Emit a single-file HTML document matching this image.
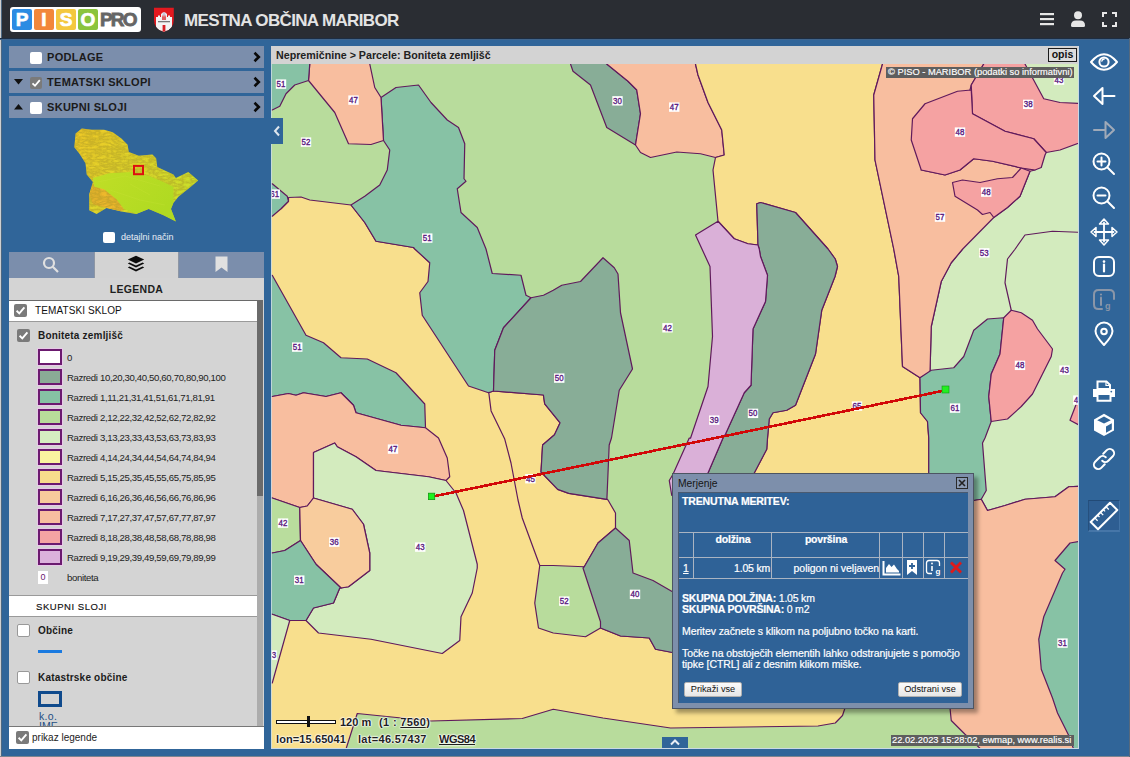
<!DOCTYPE html>
<html><head><meta charset="utf-8">
<style>
*{margin:0;padding:0;box-sizing:border-box}
html,body{width:1130px;height:757px;overflow:hidden;background:#306599;font-family:"Liberation Sans",sans-serif}
.a{position:absolute}
svg{display:block}
#hdr{left:0;top:0;width:1130px;height:38px;background:#2a2d33}
#edge{left:0;top:0;width:2px;height:757px;background:linear-gradient(90deg,#cfcfcf 0,#cfcfcf 1px,#4d6882 1px,#4d6882 2px)}
.row{left:9px;width:255px;height:22px;background:#7b8eac}
.row .t{position:absolute;left:38px;top:5px;font:bold 11px "Liberation Sans";color:#1b1b1b;letter-spacing:0.3px}
.cb{position:absolute;width:12px;height:12px;background:#fff;border-radius:2px}
.cbk{background:#7a7a7a}
.chev{position:absolute;right:3px;top:5px}
.tab{top:252px;height:26px;width:85px;background:#7b8eac}
.leg{font:9.6px "Liberation Sans";color:#222;letter-spacing:-0.35px}
.sw{position:absolute;left:38px;width:24px;height:16px;border:2.5px solid #6b1a6f;box-shadow:0 0 0 1px #e8c8e8}
.map{left:271px;top:64px;width:807px;height:684px;overflow:hidden;background:#b8dc9c}
.dt{font:10.5px "Liberation Sans";color:#fff;letter-spacing:-0.2px;-webkit-text-stroke:0.2px #fff}
.sc{font:bold 11px "Liberation Sans";color:#1e1e1e;white-space:nowrap;line-height:13px;text-shadow:0 0 2px #fff,0 0 2px #fff,0 0 2px #fff,0 0 1px #fff}
.btn{height:15px;background:linear-gradient(#fbfbfb,#e6e6e6);border:1px solid #b0b0b0;border-radius:2px;font:9.2px "Liberation Sans";color:#111;text-align:center;line-height:13px}
.dt{white-space:nowrap}
</style></head><body>
<div id="hdr" class="a"></div>
<div id="edge" class="a"></div>
<div class="a" style="left:0;top:38px;width:1130px;height:1px;background:#1d2d42"></div>
<div class="a" style="left:0;top:39px;width:1130px;height:1px;background:#40648b"></div>

<!-- logo -->
<div class="a" style="left:10px;top:7px;width:131px;height:25px;background:#fff;border-radius:3px"></div>
<div class="a" style="left:12px;top:9px;width:20px;height:21px;background:#2b8be3;border-radius:2px;color:#fff;font:bold 19px 'Liberation Sans';text-align:center;line-height:22px;-webkit-text-stroke:0.7px #fff">P</div>
<div class="a" style="left:34px;top:9px;width:20px;height:21px;background:#f2873a;border-radius:2px;color:#fff;font:bold 19px 'Liberation Sans';text-align:center;line-height:22px;-webkit-text-stroke:0.7px #fff">I</div>
<div class="a" style="left:56px;top:9px;width:20px;height:21px;background:#f4c83f;border-radius:2px;color:#fff;font:bold 19px 'Liberation Sans';text-align:center;line-height:22px;-webkit-text-stroke:0.7px #fff">S</div>
<div class="a" style="left:78px;top:9px;width:20px;height:21px;background:#8bc43d;border-radius:2px;color:#fff;font:bold 19px 'Liberation Sans';text-align:center;line-height:22px;-webkit-text-stroke:0.7px #fff">O</div>
<div class="a" style="left:100px;top:8px;font:bold 19px 'Liberation Sans';color:#666;letter-spacing:-1.8px;line-height:24px;-webkit-text-stroke:0.8px #666">PRO</div>

<!-- coat of arms -->
<svg class="a" style="left:153px;top:7px" width="22" height="26" viewBox="153 7 22 26">
<defs><clipPath id="sh"><path d="M154 7.8 H173.8 V20 Q173.8 29 163.9 31.8 Q154 29 154 20 Z"/></clipPath></defs>
<path d="M154 7.8 H173.8 V20 Q173.8 29 163.9 31.8 Q154 29 154 20 Z" fill="#e3191f"/>
<g clip-path="url(#sh)">
<path d="M156 30 V17 H158 V15.5 H160 V17 H162 V30 Z" fill="#f4f4f4"/>
<path d="M166 30 V17 H168 V15.5 H170 V17 H172 V30 Z" fill="#f4f4f4"/>
<path d="M161 22 V14 Q164 10.5 167 14 V22Z" fill="#f0eef0"/>
<rect x="162.7" y="12.5" width="2.6" height="3" fill="#c8c8e0"/>
<path d="M157 21 H171 V33 H157Z" fill="#f4f4f4"/>
<rect x="158" y="21.3" width="12" height="0.9" fill="#444"/>
<rect x="162.6" y="25" width="2.8" height="8" fill="#d62025"/>
<path d="M162 14.5 L163 17 L164 14.5 L165 17 L166 14.5 V20 H162Z" fill="#d62025" opacity="0.7"/>
</g>
</svg>
<div class="a" style="left:184px;top:11px;font:bold 17px 'Liberation Sans';color:#e3e3e3;letter-spacing:-0.65px;line-height:20px">MESTNA OBČINA MARIBOR</div>

<!-- header icons -->
<svg class="a" style="left:1039px;top:12px" width="16" height="14"><rect x="1" y="1" width="14" height="2.2" fill="#e6e6e6"/><rect x="1" y="6" width="14" height="2.2" fill="#e6e6e6"/><rect x="1" y="11" width="14" height="2.2" fill="#e6e6e6"/></svg>
<svg class="a" style="left:1070px;top:11px" width="16" height="17"><circle cx="8" cy="4.3" r="4" fill="#e6e6e6"/><path d="M1 14.5 Q1 9.6 6 9.6 H10 Q15 9.6 15 14.5 Q15 16 13.5 16 H2.5 Q1 16 1 14.5Z" fill="#e6e6e6"/></svg>
<svg class="a" style="left:1101px;top:11px" width="17" height="17" fill="none" stroke="#e6e6e6" stroke-width="2"><path d="M2 6V2H6M11 2H15V6M15 11V15H11M6 15H2V11"/></svg>

<!-- left rows -->
<div class="a row" style="top:46px"><div class="cb" style="left:21px;top:6px"></div><div class="t">PODLAGE</div><svg class="chev" width="8" height="12"><path d="M1.5 1.8 L5.8 6 L1.5 10.2" stroke="#0a0a0a" stroke-width="2.6" fill="none"/></svg></div>
<div class="a row" style="top:71px"><svg class="a" style="left:5px;top:8px" width="9" height="6"><path d="M0 0H9L4.5 5.5Z" fill="#111"/></svg><div class="cb cbk" style="left:21px;top:6px"><svg width="12" height="12"><path d="M2.5 6.3 L5 8.8 L9.8 3.2" stroke="#fff" stroke-width="1.8" fill="none"/></svg></div><div class="t">TEMATSKI SKLOPI</div><svg class="chev" width="8" height="12"><path d="M1.5 1.8 L5.8 6 L1.5 10.2" stroke="#0a0a0a" stroke-width="2.6" fill="none"/></svg></div>
<div class="a row" style="top:96px"><svg class="a" style="left:5px;top:8px" width="9" height="6"><path d="M0 5.5H9L4.5 0Z" fill="#111"/></svg><div class="cb" style="left:21px;top:6px"></div><div class="t">SKUPNI SLOJI</div><svg class="chev" width="8" height="12"><path d="M1.5 1.8 L5.8 6 L1.5 10.2" stroke="#0a0a0a" stroke-width="2.6" fill="none"/></svg></div>

<!-- overview map placeholder -->

<svg class="a" style="left:70px;top:125px" width="135" height="100" viewBox="70 125 135 100">
<defs>
<linearGradient id="g1" x1="0" y1="0" x2="1" y2="0.6"><stop offset="0" stop-color="#f0c626"/><stop offset="0.45" stop-color="#e2d42a"/><stop offset="1" stop-color="#c8e02a"/></linearGradient>
<linearGradient id="g2" x1="0" y1="0" x2="1" y2="0.5"><stop offset="0" stop-color="#c0de26"/><stop offset="1" stop-color="#b0da22"/></linearGradient>
<clipPath id="ovc"><path d="M75.6 133.5 L81.8 128.6 L91.7 129.8 L104.1 129.8 L112.7 132.3 L121.4 138.5 L127.6 144.7 L128.8 152.1 L138.8 155.8 L152.4 154.6 L156.1 158.3 L157.3 167 L173.4 174.4 L175.9 178.1 L188.3 171.9 L198.2 180.6 L190.8 186.8 L178.4 196.7 L173.4 202.9 L171 209.1 L175.9 221.5 L163.5 215.3 L148.7 209.1 L136.3 214.1 L121.4 211.6 L106.5 207.9 L96.6 214.1 L89.2 210.3 L89.2 194.2 L92.9 181.9 L86.7 174.4 L85.5 163.3 L79.3 153.4 L74.3 147.2Z"/></clipPath>
<filter id="tex" x="0" y="0" width="100%" height="100%"><feTurbulence type="turbulence" baseFrequency="0.12 0.3" numOctaves="3" seed="11"/><feColorMatrix type="matrix" values="0 0 0 0 0.35  0 0 0 0 0.28  0 0 0 0 0.02  0 0 0 -2.2 1.25"/></filter>
</defs>
<g clip-path="url(#ovc)">
<rect x="70" y="125" width="135" height="100" fill="url(#g1)"/>
<path d="M89.2 194.2 L92.9 204.2 L106.5 207.9 L121.4 211.6 L123.9 209.1 L116.5 199.2 L104.1 189.3 L92.9 184.3Z" fill="#eeb82c"/>
<rect x="70" y="125" width="135" height="100" filter="url(#tex)" opacity="0.42"/>
<path d="M92.9 178.1 L109 173.2 L131.3 171.9 L148.7 175.7 L163.5 181.9 L173.4 186.8 L173.4 202.9 L171 209.1 L175.9 221.5 L163.5 215.3 L148.7 209.1 L136.3 214.1 L123.9 209.1 L116.5 199.2 L104.1 189.3 L94.2 186.8Z" fill="url(#g2)"/>
<g stroke="#d4ea48" stroke-width="0.5" opacity="0.35" fill="none"><path d="M98 182 L125 176 L160 186 M110 190 L140 200 L165 205 M130 184 L150 195"/></g>
</g>
<rect x="134" y="165.9" width="9" height="8.3" fill="none" stroke="#dd1010" stroke-width="2"/>
</svg>

<div class="a cb" style="left:103px;top:232px;width:12px;height:11px"></div>
<div class="a" style="left:121px;top:232px;font:9px 'Liberation Sans';color:#e8eef5">detajlni način</div>

<!-- tabs -->
<div class="a tab" style="left:9px"></div>
<div class="a tab" style="left:94px;background:#d3d3d3;border-left:1px solid #8d96a4;border-right:1px solid #8d96a4"></div>
<div class="a tab" style="left:179px"></div>
<svg class="a" style="left:42px;top:256px" width="18" height="18" fill="none" stroke="#e0e0e0" stroke-width="2.2"><circle cx="7" cy="7" r="5"/><path d="M10.8 10.8 L16 16"/></svg>
<svg class="a" style="left:127px;top:255px" width="18" height="18" viewBox="0 0 18 18"><path d="M9 0.8 L17.2 4.6 L9 8.4 L0.8 4.6Z" fill="#0c0c0c"/><path d="M2.4 7.6 L9 10.6 L15.6 7.6 L17.2 8.6 L9 12.5 L0.8 8.6Z" fill="#0c0c0c"/><path d="M2.4 11.6 L9 14.6 L15.6 11.6 L17.2 12.6 L9 16.6 L0.8 12.6Z" fill="#0c0c0c"/></svg>
<svg class="a" style="left:215px;top:256px" width="13" height="17"><path d="M0.5 0.5H12.5V16L6.5 11.5L0.5 16Z" fill="#e0e0e0"/></svg>

<!-- legend panel -->
<div class="a" style="left:9px;top:278px;width:255px;height:448px;background:#d4d4d4"></div>
<div class="a" style="left:9px;top:283px;width:255px;text-align:center;font:bold 10.5px 'Liberation Sans';color:#1e1e1e;letter-spacing:0.3px">LEGENDA</div>
<div class="a" style="left:9px;top:300px;width:249px;height:1px;background:#6a6a6a"></div>
<div class="a" style="left:9px;top:301px;width:249px;height:20px;background:#fff"></div>
<div class="a" style="left:9px;top:321px;width:249px;height:1px;background:#9a9a9a"></div>
<div class="a cb cbk" style="left:14px;top:304px;width:13px;height:13px"><svg width="13" height="13"><path d="M2.6 6.8 L5.3 9.4 L10.4 3.4" stroke="#fff" stroke-width="1.9" fill="none"/></svg></div>
<div class="a" style="left:35px;top:305px;font:10px 'Liberation Sans';color:#111;letter-spacing:0.1px">TEMATSKI SKLOP</div>
<div class="a cb cbk" style="left:17px;top:329px;width:13px;height:13px"><svg width="13" height="13"><path d="M2.6 6.8 L5.3 9.4 L10.4 3.4" stroke="#fff" stroke-width="1.9" fill="none"/></svg></div>
<div class="a" style="left:38px;top:330px;font:bold 10px 'Liberation Sans';color:#1b1b1b;letter-spacing:0.2px">Boniteta zemljišč</div>

<div class="a sw" style="top:349px;background:#fff"></div><div class="a leg" style="left:67px;top:352px">0</div>
<div class="a sw" style="top:369px;background:#8aab96"></div><div class="a leg" style="left:67px;top:372px">Razredi 10,20,30,40,50,60,70,80,90,100</div>
<div class="a sw" style="top:389px;background:#86c2a4"></div><div class="a leg" style="left:67px;top:392px">Razredi 1,11,21,31,41,51,61,71,81,91</div>
<div class="a sw" style="top:409px;background:#b8dc9a"></div><div class="a leg" style="left:67px;top:412px">Razredi 2,12,22,32,42,52,62,72,82,92</div>
<div class="a sw" style="top:429px;background:#d6edc2"></div><div class="a leg" style="left:67px;top:432px">Razredi 3,13,23,33,43,53,63,73,83,93</div>
<div class="a sw" style="top:449px;background:#faf3a0"></div><div class="a leg" style="left:67px;top:452px">Razredi 4,14,24,34,44,54,64,74,84,94</div>
<div class="a sw" style="top:469px;background:#f8dc8c"></div><div class="a leg" style="left:67px;top:472px">Razredi 5,15,25,35,45,55,65,75,85,95</div>
<div class="a sw" style="top:489px;background:#f8cb9c"></div><div class="a leg" style="left:67px;top:492px">Razredi 6,16,26,36,46,56,66,76,86,96</div>
<div class="a sw" style="top:509px;background:#f8bea0"></div><div class="a leg" style="left:67px;top:512px">Razredi 7,17,27,37,47,57,67,77,87,97</div>
<div class="a sw" style="top:529px;background:#f5a3a3"></div><div class="a leg" style="left:67px;top:532px">Razredi 8,18,28,38,48,58,68,78,88,98</div>
<div class="a sw" style="top:549px;background:#dcb2dc"></div><div class="a leg" style="left:67px;top:552px">Razredi 9,19,29,39,49,59,69,79,89,99</div>
<div class="a" style="left:38px;top:571px;width:10px;height:13px;background:#fff;font:9px 'Liberation Sans';color:#6b1a6f;text-align:center;line-height:13px">0</div>
<div class="a leg" style="left:67px;top:572px">boniteta</div>

<div class="a" style="left:9px;top:595px;width:249px;height:1px;background:#9a9a9a"></div>
<div class="a" style="left:9px;top:596px;width:249px;height:20px;background:#fff"></div>
<div class="a" style="left:9px;top:616px;width:249px;height:1px;background:#9a9a9a"></div>
<div class="a" style="left:36px;top:601px;font:9.5px 'Liberation Sans';color:#111;letter-spacing:0.55px;-webkit-text-stroke:0.15px #111">SKUPNI SLOJI</div>

<div class="a cb" style="left:17px;top:624px;width:13px;height:13px;border:1px solid #999"></div>
<div class="a" style="left:38px;top:625px;font:bold 10px 'Liberation Sans';color:#1b1b1b;letter-spacing:0.2px">Občine</div>
<div class="a" style="left:38px;top:650px;width:24px;height:3px;background:#1a7ae0"></div>
<div class="a cb" style="left:17px;top:671px;width:13px;height:13px;border:1px solid #999"></div>
<div class="a" style="left:38px;top:672px;font:bold 10px 'Liberation Sans';color:#1b1b1b;letter-spacing:0.2px">Katastrske občine</div>
<div class="a" style="left:38px;top:691px;width:24px;height:16px;border:3px solid #0f4a8c"></div>
<div class="a" style="left:39px;top:710px;font:10.5px 'Liberation Sans';color:#1f4f84;letter-spacing:0.3px">k.o.</div>
<div class="a" style="left:39px;top:721px;height:5px;overflow:hidden;font:10.5px 'Liberation Sans';color:#1f4f84;line-height:10px">IME</div>

<!-- scrollbar -->
<div class="a" style="left:257px;top:300px;width:6px;height:426px;background:#acacac"></div>
<div class="a" style="left:257px;top:300px;width:6px;height:196px;background:#6b6b6b"></div>

<!-- footer -->
<div class="a" style="left:9px;top:726px;width:255px;height:23px;background:#fff;border-top:1px solid #777"></div>
<div class="a cb cbk" style="left:16px;top:731px;width:13px;height:13px"><svg width="13" height="13"><path d="M2.6 6.8 L5.3 9.4 L10.4 3.4" stroke="#fff" stroke-width="1.9" fill="none"/></svg></div>
<div class="a" style="left:32px;top:732px;font:10px 'Liberation Sans';color:#222">prikaz legende</div>

<!-- breadcrumb -->
<div class="a" style="left:271px;top:46px;width:808px;height:18px;background:#d3d3d3"></div>
<div class="a" style="left:276px;top:49px;font:bold 10.7px 'Liberation Sans';color:#222">Nepremičnine &gt; Parcele: Boniteta zemljišč</div>
<div class="a" style="left:1048px;top:48px;width:29px;height:14px;border:1.5px solid #1a1a1a;background:#dcdcdc;font:bold 10.5px 'Liberation Sans';color:#111;text-align:center;line-height:11px">opis</div>

<!-- MAP -->
<div class="a map" id="map">
<svg width="807" height="684" viewBox="271 64 807 684" id="mapsvg">
<g stroke="#601a5c" stroke-width="1.2" stroke-linejoin="round">
<polygon points="265,216.25 281,208.75 288.5,201.25 288.5,197.5 301,197 309.75,200 351,205 364.75,222.5 376,241.25 413.5,247.5 470,300 488.5,392.75 493.5,391 543.4,395 544.7,403.8 560.1,422.8 554.5,434.7 542.6,445 541,472 557.7,489.4 568.8,493.4 606.9,499.3 608,500 615.5,513 615.5,528 598,543 584.25,566.75 553,565.5 539.75,565.5 534.75,603 538.5,628 553.25,633 585.5,636.75 600.5,628 620.5,636 649.25,638 655.5,649.25 672.5,652.5 700,652 700,700 845,700 845,708 842.5,715.5 835.25,723 818,726 670.5,728 603,718 553.25,709.25 522.25,718.5 431,721 357.25,713.5 344.75,753 265,753" fill="#f8df8d"/>
<polygon points="381,97.5 396,87.5 418.5,85 431,102.5 447.25,120 458.5,127.5 464.75,143.75 464,178.75 466,181.25 457.25,188.75 461,212.5 477.25,227.5 486,249 492.25,273.5 521,275.25 526,295.25 531,297.75 503.5,327.75 494.75,350.25 493.5,391 488.5,392.75 468.5,386 422.25,315.25 419.75,292.75 428,281.5 429.75,262.75 414.75,249 413.5,247.5 376,241.25 364.75,222.5 351,205 364.75,196.25 379.75,185 387.25,170 389.75,150 383.5,140.5" fill="#87c2a5"/>
<polygon points="531,297.75 543.5,295.25 553.25,290.25 561.75,285.25 580.5,281.5 603,257.75 614.25,267.75 618,274 620.5,312.75 632.5,369 619.25,390.25 611.5,438 609.2,445 606.9,499.3 568.8,493.4 557.7,489.4 541,472 542.6,445 554.5,434.7 560.1,422.8 544.7,403.8 543.4,395 493.5,391 494.75,350.25 503.5,327.75" fill="#88ad97"/>
<polygon points="309.75,64 309.75,59 369.75,59 369.75,64 374.75,87.5 381,97.5 383.5,140.5 371,144.5 348.5,143.75 334.75,112.5 308.5,80.5" fill="#f8be9f"/>
<polygon points="265,64 265,59 309.75,59 309.75,64 308.5,80.5 294.75,85 286,93.75 279.75,106.25 272.25,110 265,110" fill="#87c2a5"/>
<polygon points="265,183.75 272.25,183.75 287.25,196.25 288.5,201.25 281,208.75 272.25,216.25 265,216.25" fill="#87c2a5"/>
<polygon points="570.5,64 570.5,59 606.75,59 606.75,64 628,81.25 636.75,90 640.5,113.75 635.5,145 606.75,127.5 590.5,85 573,71.25" fill="#88ad97"/>
<polygon points="606.75,64 606.75,59 695.5,59 695.5,64 698,75 708,102.5 721.75,130 724.25,155 715.5,157.5 700.5,153.75 676.75,152 650.5,157.5 640.5,152.5 635.5,145 640.5,113.75 636.75,90 628,81.25" fill="#f8be9f"/>
<polygon points="695.5,64 695.5,59 882.5,59 882.5,64 873.75,95 875,160 893.75,249 898.75,276.5 902.5,366.5 920,377.75 920.5,412.75 927.5,421.5 928.75,438 928.75,480 754,480 754.25,473 766.75,449.25 767.5,438.25 769.25,419 773,412.75 786.75,410.25 795.5,405.25 815.5,354 821.75,310.25 835,276.5 837.5,266.5 835.25,259 828,249 795.5,212.5 760.5,202.5 756.75,203.75 758,245 748,243.75 734.25,238.75 718,221.25 713,170 715.5,157.5 724.25,155 721.75,130 708,102.5 698,75" fill="#f8df8d"/>
<polygon points="756.75,203.75 760.5,202.5 795.5,212.5 828,249 835.25,259 837.5,266.5 835,276.5 821.75,310.25 815.5,354 795.5,405.25 786.75,410.25 773,412.75 769.25,419 767.5,438.25 766.75,449.25 754.25,473 754,480 700,480 708,473 723,438 725.5,434 744.25,392.75 751,385.25 753,329 765.5,301.5 767.5,275.25 760.5,256.5 759.25,249 758,245" fill="#88ad97"/>
<polygon points="718,221.25 734.25,238.75 748,243.75 758,245 759.25,249 760.5,256.5 767.5,275.25 765.5,301.5 753,329 751,385.25 744.25,392.75 725.5,434 723,438 708,473 700,480 680,496 671.75,495.5 669.25,480.5 673,474.25 689.25,438 690.5,438.25 708,386.5 712.5,336.5 710,266.5 695.5,235" fill="#dab0d8"/>
<polygon points="584.25,566.75 598,543 615.5,528 629.25,540.5 633,573 653,580.5 672.5,591.75 690,600 690,652.5 672.5,652.5 655.5,649.25 649.25,638 620.5,636 600.5,628 600.5,621.75 583,568" fill="#88ad97"/>
<polygon points="935,64 935,59 1084,59 1084,64 1084,486.25 1068.75,486.75 1055,496.75 1025,499.25 1005,505.5 987.5,510.5 981.25,499.25 973.75,500.5 935,500 931,372 930,372.75 931.25,326.5 941.25,281.5 951.25,262.75 962.5,249.25 935,240" fill="#d3ebbe"/>
<polygon points="882.5,64 882.5,59 983.75,59 983.75,64 971.25,85 965,110 960,130 921.25,170 945,175 960,170 973.75,158.75 992.5,161.25 1021.25,168 1035,170 1030,171.25 1020,196.25 1007.5,207.5 993.75,217.5 962.5,249.25 951.25,262.75 941.25,281.5 931.25,326.5 930,372.75 920,377.75 902.5,366.5 898.75,276.5 893.75,249 875,160 873.75,95" fill="#f8be9f"/>
<polygon points="983.75,64 983.75,59 1025,59 1025,64 1043.75,98.75 1060,102.5 1084,103.75 1084,141.25 1060,150 1046.25,152.5 1033.75,138.75 1005,131.25 972.5,113.75 971.25,85" fill="#f5a2a2"/>
<polygon points="971.25,90 957.5,91.25 925,103.75 912.5,118.75 911.25,140 921.25,170 945,175 960,170 973.75,158.75 992.5,161.25 1021.25,168 1035,170 1041.25,167.5 1045,155 1046.25,152.5 1033.75,138.75 1005,131.25 972.5,113.75" fill="#f5a2a2"/>
<polygon points="952.5,182.5 962.5,180 980,182.5 997.5,178.75 1012.5,177.5 1021.25,168 1030,171.25 1020,196.25 1007.5,207.5 993.75,217.5 990,212.5 982.5,214.5 977.5,210 955,196.25" fill="#f5a2a2"/>
<polygon points="920,377.75 931.25,370.25 953.75,367.75 963.75,356.5 973.75,330.25 987.5,319 1003.75,317.75 1000,354 991.25,374 988.75,396.5 991.25,421.5 985,438 982.5,443 986.25,490.5 981.25,499.25 973.75,500.5 928.75,480 928.75,438 927.5,421.5 920.5,412.75" fill="#87c2a5"/>
<polygon points="1003.75,317.75 1011.25,310.25 1021.25,312.75 1032.5,320.25 1037.5,329 1052.5,349 1051.25,356.5 1042.5,374 1032.5,394 1021.25,406.5 1007.5,419 991.25,421.5 988.75,396.5 991.25,374 1000,354" fill="#f5a2a2"/>
<polygon points="1084,384 1070,420.25 1084,427.75" fill="#f5a2a2"/>
<polygon points="973.75,500.5 981.25,499.25 987.5,510.5 1005,505.5 1025,499.25 1055,496.75 1068.75,486.75 1084,486.25 1084,753 985,753 965,734.25 951.25,720.5 950,708 940,700 940,500" fill="#f8be9f"/>
<polygon points="1084,540.5 1070,543 1055,560.5 1065,569.25 1062.5,573 1043.75,616.75 1038.75,639.25 1041.25,669.25 1052.5,698 1057.5,713 1068.75,735.5 1075,753 1084,753" fill="#87c2a5"/>
<polygon points="265,275.25 272.25,275.25 306,335.25 323.5,342.75 341,357.75 367.25,359 396,372.75 424.75,404 425.5,427.75 401,425.25 356,412.75 353.5,405.25 341,392.75 326,396.5 303.5,392.75 296,395.25 288.5,393.5 272.25,396.5 265,396.5" fill="#87c2a5"/>
<polygon points="265,396.5 272.25,396.5 288.5,393.5 296,395.25 303.5,392.75 326,396.5 341,392.75 353.5,405.25 356,412.75 401,425.25 425.5,427.75 438.5,438 447.25,458 449.75,476.75 446,480.5 428.5,476.75 376,470.5 356,456.75 337.25,446.75 334.75,443 313.5,452.5 313.5,498 307.25,506 299.75,507.5 272.25,498 265,498" fill="#f8be9f"/>
<polygon points="313.5,452.5 334.75,443 337.25,446.75 356,456.75 376,470.5 428.5,476.75 446,480.5 456,493 463.5,510.5 477.25,564.25 477.25,568 472.25,593 461,616.75 459.75,640.5 442.25,653.5 371,639.25 318.5,633 306,620.5 313.5,608 333.5,603 339.75,588 341,588 348.5,586.75 369.75,570.5 369.75,553 363.5,524.25 352.25,509.25 313.5,498" fill="#d3ebbe"/>
<polygon points="265,498 272.25,498 299.75,507.5 300.5,540.5 284.75,550.5 272.25,553 265,553" fill="#b9dd9d"/>
<polygon points="299.75,507.5 307.25,506 313.5,498 352.25,509.25 363.5,524.25 369.75,553 369.75,570.5 348.5,586.75 341,588 316,564.25 300.5,540.5" fill="#f8cc9d"/>
<polygon points="265,553 272.25,553 284.75,550.5 300.5,540.5 316,564.25 341,588 339.75,588 333.5,603 313.5,608 306,620.5 289.75,620.5 272.25,614.25 265,614.25" fill="#87c2a5"/>
<polygon points="265,614.25 272.25,614.25 289.75,620.5 272.25,683 265,683" fill="#d3ebbe"/>
<polyline points="488.7,391.9 491.1,410.9 504.6,438.7 511,463 518,500 522.25,518 539.75,565.5" fill="none"/>
<polyline points="1084,232.5 1052.5,231.25 1025,235 1015,249.25 1007.5,259 1005,282.75 1011.25,310.25" fill="none"/>
</g>
<g font-family="Liberation Sans" font-size="8.5" fill="#5a1a80" stroke="#5a1a80" stroke-width="0.35" text-anchor="middle">
<rect x="275.80" y="79.40" width="10.40" height="9.4" fill="#fff" stroke="none"/><text x="281.00" y="87.00" textLength="8.80" lengthAdjust="spacingAndGlyphs">51</text>
<rect x="348.30" y="95.40" width="10.40" height="9.4" fill="#fff" stroke="none"/><text x="353.50" y="103.00" textLength="8.80" lengthAdjust="spacingAndGlyphs">47</text>
<rect x="300.80" y="137.40" width="10.40" height="9.4" fill="#fff" stroke="none"/><text x="306.00" y="145.00" textLength="8.80" lengthAdjust="spacingAndGlyphs">52</text>
<rect x="269.55" y="189.40" width="10.40" height="9.4" fill="#fff" stroke="none"/><text x="274.75" y="197.00" textLength="8.80" lengthAdjust="spacingAndGlyphs">61</text>
<rect x="422.05" y="233.40" width="10.40" height="9.4" fill="#fff" stroke="none"/><text x="427.25" y="241.00" textLength="8.80" lengthAdjust="spacingAndGlyphs">51</text>
<rect x="612.30" y="96.15" width="10.40" height="9.4" fill="#fff" stroke="none"/><text x="617.50" y="103.75" textLength="8.80" lengthAdjust="spacingAndGlyphs">30</text>
<rect x="669.05" y="102.40" width="10.40" height="9.4" fill="#fff" stroke="none"/><text x="674.25" y="110.00" textLength="8.80" lengthAdjust="spacingAndGlyphs">47</text>
<rect x="1023.05" y="99.65" width="10.40" height="9.4" fill="#fff" stroke="none"/><text x="1028.25" y="107.25" textLength="8.80" lengthAdjust="spacingAndGlyphs">38</text>
<rect x="954.80" y="127.40" width="10.40" height="9.4" fill="#fff" stroke="none"/><text x="960.00" y="135.00" textLength="8.80" lengthAdjust="spacingAndGlyphs">48</text>
<rect x="981.05" y="187.40" width="10.40" height="9.4" fill="#fff" stroke="none"/><text x="986.25" y="195.00" textLength="8.80" lengthAdjust="spacingAndGlyphs">48</text>
<rect x="934.80" y="212.40" width="10.40" height="9.4" fill="#fff" stroke="none"/><text x="940.00" y="220.00" textLength="8.80" lengthAdjust="spacingAndGlyphs">57</text>
<rect x="1053.80" y="75.40" width="10.40" height="9.4" fill="#fff" stroke="none"/><text x="1059.00" y="83.00" textLength="8.80" lengthAdjust="spacingAndGlyphs">43</text>
<rect x="292.05" y="342.40" width="10.40" height="9.4" fill="#fff" stroke="none"/><text x="297.25" y="350.00" textLength="8.80" lengthAdjust="spacingAndGlyphs">51</text>
<rect x="554.05" y="373.40" width="10.40" height="9.4" fill="#fff" stroke="none"/><text x="559.25" y="381.00" textLength="8.80" lengthAdjust="spacingAndGlyphs">50</text>
<rect x="662.30" y="323.10" width="10.40" height="9.4" fill="#fff" stroke="none"/><text x="667.50" y="330.70" textLength="8.80" lengthAdjust="spacingAndGlyphs">42</text>
<rect x="709.05" y="415.40" width="10.40" height="9.4" fill="#fff" stroke="none"/><text x="714.25" y="423.00" textLength="8.80" lengthAdjust="spacingAndGlyphs">39</text>
<rect x="747.80" y="408.65" width="10.40" height="9.4" fill="#fff" stroke="none"/><text x="753.00" y="416.25" textLength="8.80" lengthAdjust="spacingAndGlyphs">50</text>
<rect x="979.05" y="248.15" width="10.40" height="9.4" fill="#fff" stroke="none"/><text x="984.25" y="255.75" textLength="8.80" lengthAdjust="spacingAndGlyphs">53</text>
<rect x="949.80" y="403.40" width="10.40" height="9.4" fill="#fff" stroke="none"/><text x="955.00" y="411.00" textLength="8.80" lengthAdjust="spacingAndGlyphs">61</text>
<rect x="1014.80" y="360.65" width="10.40" height="9.4" fill="#fff" stroke="none"/><text x="1020.00" y="368.25" textLength="8.80" lengthAdjust="spacingAndGlyphs">48</text>
<rect x="1059.30" y="365.40" width="10.40" height="9.4" fill="#fff" stroke="none"/><text x="1064.50" y="373.00" textLength="8.80" lengthAdjust="spacingAndGlyphs">43</text>
<rect x="851.80" y="401.40" width="10.40" height="9.4" fill="#fff" stroke="none"/><text x="857.00" y="409.00" textLength="8.80" lengthAdjust="spacingAndGlyphs">65</text>
<rect x="1073.15" y="395.40" width="5.70" height="9.4" fill="#fff" stroke="none"/><text x="1076.00" y="403.00" textLength="4.10" lengthAdjust="spacingAndGlyphs">4</text>
<rect x="387.80" y="444.40" width="10.40" height="9.4" fill="#fff" stroke="none"/><text x="393.00" y="452.00" textLength="8.80" lengthAdjust="spacingAndGlyphs">47</text>
<rect x="277.80" y="518.40" width="10.40" height="9.4" fill="#fff" stroke="none"/><text x="283.00" y="526.00" textLength="8.80" lengthAdjust="spacingAndGlyphs">42</text>
<rect x="329.05" y="537.40" width="10.40" height="9.4" fill="#fff" stroke="none"/><text x="334.25" y="545.00" textLength="8.80" lengthAdjust="spacingAndGlyphs">36</text>
<rect x="415.05" y="542.40" width="10.40" height="9.4" fill="#fff" stroke="none"/><text x="420.25" y="550.00" textLength="8.80" lengthAdjust="spacingAndGlyphs">43</text>
<rect x="294.05" y="575.40" width="10.40" height="9.4" fill="#fff" stroke="none"/><text x="299.25" y="583.00" textLength="8.80" lengthAdjust="spacingAndGlyphs">31</text>
<rect x="525.20" y="474.00" width="10.40" height="9.4" fill="#fff" stroke="none"/><text x="530.40" y="481.60" textLength="8.80" lengthAdjust="spacingAndGlyphs">45</text>
<rect x="559.05" y="596.40" width="10.40" height="9.4" fill="#fff" stroke="none"/><text x="564.25" y="604.00" textLength="8.80" lengthAdjust="spacingAndGlyphs">52</text>
<rect x="629.80" y="589.65" width="10.40" height="9.4" fill="#fff" stroke="none"/><text x="635.00" y="597.25" textLength="8.80" lengthAdjust="spacingAndGlyphs">40</text>
<rect x="271.15" y="650.40" width="5.70" height="9.4" fill="#fff" stroke="none"/><text x="274.00" y="658.00" textLength="4.10" lengthAdjust="spacingAndGlyphs">3</text>
<rect x="1057.30" y="638.40" width="10.40" height="9.4" fill="#fff" stroke="none"/><text x="1062.50" y="646.00" textLength="8.80" lengthAdjust="spacingAndGlyphs">31</text>
</g>

</svg>
</div>
<div class="a" style="left:1078px;top:46px;width:1px;height:703px;background:#c9d8e6"></div>
<div class="a" style="left:271px;top:748px;width:808px;height:1px;background:#c9d8e6"></div>
<div class="a" style="left:271px;top:64px;width:1px;height:684px;background:#cadbe6;opacity:0.8"></div>
<div class="a" style="left:0px;top:756px;width:1130px;height:1px;background:#7d858f"></div>


<!-- map overlays -->
<div class="a" style="left:886px;top:67px;width:188px;height:11px;background:#5e5e5e"></div>
<div class="a" style="left:888px;top:66px;font:9.3px 'Liberation Sans';color:#fff;line-height:13px;white-space:nowrap;-webkit-text-stroke:0.15px #fff">© PISO - MARIBOR (podatki so informativni)</div>
<div class="a" style="left:891px;top:735px;width:183px;height:11px;background:#5e5e5e"></div>
<div class="a" style="left:892px;top:734px;font:9.3px 'Liberation Sans';color:#fff;-webkit-text-stroke:0.15px #fff;line-height:13px;white-space:nowrap">22.02.2023 15:28:02, ewmap, www.realis.si</div>
<svg class="a" style="left:271px;top:64px" width="807" height="684" viewBox="271 64 807 684">
<line x1="431.5" y1="496.8" x2="945.5" y2="390.3" stroke="#d20808" stroke-width="2.6" shape-rendering="crispEdges"/>
<rect x="428.5" y="493.2" width="6.2" height="6.4" fill="#1ef01e" stroke="#109a10" stroke-width="0.8"/>
<rect x="942" y="386" width="7" height="7" fill="#22ee22" stroke="#119911" stroke-width="0.6"/>
<rect x="276.5" y="720.5" width="59" height="3" fill="#fff" stroke="#111" stroke-width="1"/>
<rect x="307" y="716" width="3" height="11" fill="#111"/>
</svg>

<div class="a sc" style="left:340px;top:716px">120 m</div>
<div class="a sc" style="left:379px;top:716px;letter-spacing:0.35px">(1 : <u>7560</u>)</div>
<div class="a sc" style="left:276px;top:733px;letter-spacing:0.1px">lon=15.65041</div>
<div class="a sc" style="left:358px;top:733px;letter-spacing:0.3px">lat=46.57437</div>
<div class="a sc" style="left:439px;top:733px;letter-spacing:-0.5px"><u>WGS84</u></div>
<div class="a" style="left:662px;top:737px;width:26px;height:11px;background:#306599"></div>
<svg class="a" style="left:669px;top:738px" width="12" height="8"><path d="M2 6.5 L6 2.5 L10 6.5" stroke="#e8eef5" stroke-width="2" fill="none"/></svg>

<!-- dialog -->
<div class="a" style="left:672px;top:473px;width:302px;height:236px;background:#7d8fab;border:1px solid #4c5562;box-shadow:4px 4px 4px rgba(0,0,0,0.35)"></div>
<div class="a" style="left:678px;top:477px;font:10.3px 'Liberation Sans';color:#151515;line-height:13px">Merjenje</div>
<div class="a" style="left:956px;top:477px;width:12px;height:12px;border:1px solid #2a2a2a;background:#8a9ab3"></div>
<svg class="a" style="left:956px;top:477px" width="12" height="12"><path d="M3 3 L9 9 M9 3 L3 9" stroke="#222" stroke-width="1.6"/></svg>
<div class="a" style="left:678px;top:492px;width:290px;height:211px;background:#2f6297;border-top:1px solid #4a5a70;border-left:1px solid #4a5a70"></div>
<div class="a dt" style="left:682px;top:495px;font-weight:bold;letter-spacing:-0.15px">TRENUTNA MERITEV:</div>
<svg class="a" style="left:678px;top:530px" width="290" height="50">
<g stroke="#aab4c2" stroke-width="1" fill="none">
<path d="M1 2.5 H290 M1 27.5 H290 M1 48.5 H290"/>
<path d="M15.5 2 V48.5 M93.5 2 V48.5 M201.5 2 V48.5 M224.5 2 V48.5 M245.5 2 V48.5 M266.5 2 V48.5"/>
</g>
</svg>
<div class="a dt" style="left:694px;top:533px;width:78px;text-align:center;font-weight:bold">dolžina</div>
<div class="a dt" style="left:772px;top:533px;width:108px;text-align:center;font-weight:bold">površina</div>
<div class="a dt" style="left:683px;top:562px;text-decoration:underline">1</div>
<div class="a dt" style="left:694px;top:562px;width:76px;text-align:right">1.05 km</div>
<div class="a dt" style="left:772px;top:562px;width:107px;text-align:right;letter-spacing:-0.05px">poligon ni veljaven</div>
<svg class="a" style="left:882px;top:560px" width="20" height="16"><path d="M1.5 1 V14.5 H18.5" stroke="#fff" stroke-width="2" fill="none"/><path d="M4 12.5 L4 8 L7 4 L9.5 7 L12 4.5 L15 9 L17 11 L17 12.5Z" fill="#fff"/></svg>
<svg class="a" style="left:906px;top:559px" width="12" height="17"><path d="M1 1 H11 V16 L6 12 L1 16Z" fill="#fff"/><path d="M6 4 V10 M3 7 H9" stroke="#2f6297" stroke-width="1.8"/></svg>
<svg class="a" style="left:925px;top:559px" width="17" height="17" fill="none" stroke="#fff" stroke-width="1.3"><path d="M8 1.5 H4 Q1.5 1.5 1.5 4 V12 Q1.5 14.5 4 14.5 H7 M8 1.5 H12 Q14.5 1.5 14.5 4 V7"/><circle cx="7" cy="4.5" r="0.9" fill="#fff" stroke="none"/><path d="M7 7 V12" stroke-width="1.6"/><text x="10.5" y="15" font-family="Liberation Sans" font-size="8" font-weight="bold" fill="#fff" stroke="none">g</text></svg>
<svg class="a" style="left:949px;top:561px" width="14" height="13"><path d="M2 1.5 L12 11.5 M12 1.5 L2 11.5" stroke="#dd1a1a" stroke-width="2.8"/></svg>
<div class="a dt" style="left:682px;top:593px;line-height:11.3px"><b>SKUPNA DOLŽINA:</b> 1.05 km<br><b>SKUPNA POVRŠINA:</b> 0 m2</div>
<div class="a dt" style="left:682px;top:625px;letter-spacing:-0.08px">Meritev začnete s klikom na poljubno točko na karti.</div>
<div class="a dt" style="left:682px;top:648px;line-height:11.3px;letter-spacing:-0.08px">Točke na obstoječih elementih lahko odstranjujete s pomočjo<br>tipke [CTRL] ali z desnim klikom miške.</div>
<div class="a btn" style="left:684px;top:682px;width:58px">Prikaži vse</div>
<div class="a btn" style="left:898px;top:682px;width:64px">Odstrani vse</div>

<!-- collapse tab -->
<div class="a" style="left:271px;top:118px;width:12px;height:26px;background:#306599"></div>
<svg class="a" style="left:273px;top:125px" width="8" height="12"><path d="M6 1.5 L2 6 L6 10.5" stroke="#dfe6ee" stroke-width="2" fill="none"/></svg>

<!-- right toolbar placeholder -->

<svg class="a" style="left:1080px;top:40px" width="48" height="500" viewBox="1080 40 48 500">
<g fill="none" stroke="#fff" stroke-width="2" stroke-linecap="round" stroke-linejoin="round">
<path d="M1091 62 Q1104 46.5 1117 62 Q1104 77.5 1091 62Z"/>
<circle cx="1104" cy="62" r="4.6"/>
<path d="M1101.8 61.2 Q1102.2 59.2 1104.2 59" stroke-width="1.3"/>
<path d="M1094 96 L1102.5 88 V104 Z M1102.5 96 H1114.5"/>
<path d="M1094 130 H1105.5 M1105.5 122 V138 L1114 130 Z" stroke="#a0aab8"/>
<circle cx="1101.5" cy="161.5" r="8"/><path d="M1107.5 167.5 L1114 174 M1097.5 161.5 H1105.5 M1101.5 157.5 V165.5"/>
<circle cx="1101.5" cy="195.5" r="8"/><path d="M1107.5 201.5 L1114 208 M1097.5 195.5 H1105.5"/>
<path d="M1104 222.5 V241.5 M1094.5 232 H1113.5" stroke-width="1.8"/>
<path d="M1104 219 L1099.5 224 H1108.5 Z M1104 245 L1099.5 240 H1108.5 Z M1091 232 L1096 227.5 V236.5 Z M1117 232 L1112 227.5 V236.5 Z" stroke-width="1.5"/>
<rect x="1094" y="257" width="20" height="19" rx="5"/>
<path d="M1104 264.5 V271.5" stroke-width="2.2"/>
<g stroke="#8a96a8"><path d="M1104 290 H1098.5 Q1094 290 1094 294.5 V304.5 Q1094 309 1098.5 309 H1102 M1104 290 H1109.5 Q1114 290 1114 294.5 V299"/><path d="M1101 297.5 V305" stroke-width="2"/></g>
<path d="M1104 345 Q1095.5 336 1095.5 331 A8.5 8.5 0 0 1 1112.5 331 Q1112.5 336 1104 345Z"/>
<circle cx="1104" cy="331.5" r="2.8"/>
<g transform="rotate(-45 1104 459)" stroke-width="2"><path d="M1107.2 454.7 H1112.2 A4.3 4.3 0 0 1 1112.2 463.3 H1105.8 A4.3 4.3 0 0 1 1101.5 459"/><path d="M1100.8 463.3 H1095.8 A4.3 4.3 0 0 1 1095.8 454.7 H1102.2 A4.3 4.3 0 0 1 1106.5 459"/></g>
</g>
<circle cx="1104" cy="261.6" r="1.3" fill="#fff"/>
<circle cx="1101" cy="294.5" r="1.1" fill="#8a96a8"/>
<text x="1105" y="309" font-family="Liberation Sans" font-size="9" font-weight="bold" fill="#8a96a8">g</text>
<path d="M1097.5 381.5 H1106.5 L1110 385 V389 H1097.5Z" fill="#306599" stroke="#fff" stroke-width="2"/>
<path d="M1106 381 V385.5 H1110.5" fill="none" stroke="#fff" stroke-width="1.2"/>
<path d="M1093 389 H1115 V397 H1093Z" fill="#fff"/>
<path d="M1097.5 394 H1110.5 V400.8 H1097.5Z" fill="#306599" stroke="#fff" stroke-width="2"/>
<circle cx="1111.3" cy="391.6" r="0.9" fill="#306599"/>
<path d="M1104 413.8 L1114 419.5 V430.5 L1104 436 L1094 430.5 V419.5Z" fill="#fff"/>
<path d="M1104 416.6 L1110.8 420.2 L1104 423.6 L1097.2 420.2Z" fill="#306599"/>
<path d="M1106 426.6 L1111.8 423.3 V429.4 L1106 432.8Z" fill="#306599"/>
</svg>
<div class="a" style="left:1088px;top:500px;width:32px;height:32px;background:#2e5e92;border-top:1px solid #224a76;border-left:1px solid #26507e;border-bottom:2px solid #4676a8;border-right:1px solid #4273a6"></div>
<svg class="a" style="left:1088px;top:500px" width="32" height="32" viewBox="1088 500 32 32">
<g fill="none" stroke="#fff" stroke-linejoin="round">
<path d="M1110 502.8 L1117.3 510 L1098 529.3 L1090.7 522 Z" stroke-width="2"/>
<path d="M1094.8 517.9 l2.8 2.8 M1097.6 515.1 l1.9 1.9 M1100.4 512.3 l2.8 2.8 M1103.2 509.5 l1.9 1.9 M1106 506.7 l2.8 2.8" stroke-width="1.3"/>
</g></svg>

<div class="a" style="left:1128.5px;top:38px;width:1.5px;height:719px;background:#55697e"></div>
</body></html>
